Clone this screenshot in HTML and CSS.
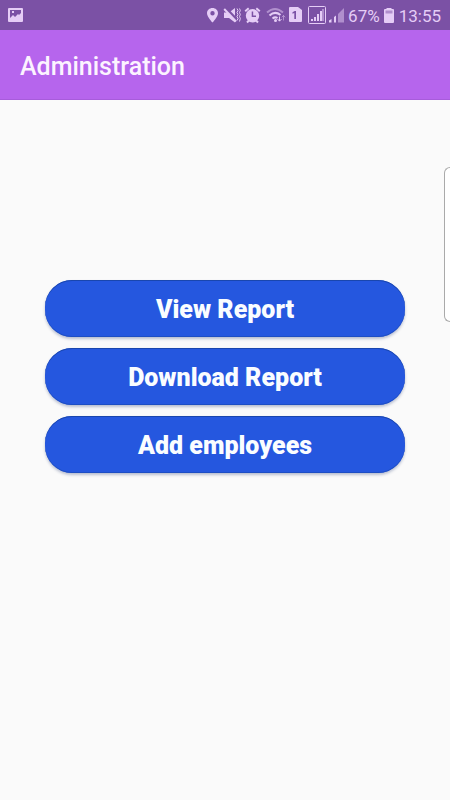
FILE: index.html
```html
<!DOCTYPE html>
<html lang="en">
<head>
<meta charset="utf-8">
<meta name="viewport" content="width=device-width, initial-scale=1">
<title>Administration</title>
<link rel="stylesheet" href="styles.css">
</head>
<body>
<div class="status-bar">
  <svg class="icon picture" width="16" height="16" viewBox="0 0 16 16" aria-hidden="true">
    <path fill-rule="evenodd" d="M1 1H14Q15 1 15 2V14Q15 15 14 15H1Q0 15 0 14V2Q0 1 1 1ZM2 3V11L5 8L7 10L10 7L11 8L13 6V3ZM4 4H6V6H4Z"/>
  </svg>
  <div class="status-items">
    <svg class="icon" width="14" height="18" viewBox="206 6 14 18" aria-hidden="true">
      <path fill-rule="evenodd" d="M212.500 8C209.400 8 207 10.200 207 13.200C207 17 212.500 22.500 212.500 22.500C212.500 22.500 218 17 218 13.200C218 10.200 215.600 8 212.500 8ZM212.500 11A2.200 2.200 0 1 1 212.500 15.400A2.200 2.200 0 1 1 212.500 11Z"/>
    </svg>
    <svg class="icon" width="18" height="18" viewBox="223 6 18 18" aria-hidden="true">
      <path d="M224 12.500H229L235 8V22.500L229 18H224Z"/>
      <path class="cut" d="M225.500 8L236.500 19.500"/>
      <path class="line" d="M224.200 9L236 21.500"/>
      <path class="line vibration" d="M237 8.500L238 10.500L237 12.500L238 14.500L237 16.500L238 18.500L237 20.500M239.500 8.500L240.300 10.500L239.500 12.500L240.300 14.500L239.500 16.500L240.300 18.500L239.500 21.500"/>
    </svg>
    <svg class="icon" width="18" height="18" viewBox="244 6 18 18" aria-hidden="true">
      <path fill-rule="evenodd" d="M252.500 9A6.700 6.700 0 1 1 252.500 22.400A6.700 6.700 0 1 1 252.500 9ZM251.700 11.500V17H256V15.600H253.200V11.500Z"/>
      <path class="line" d="M245.200 11.200L248.700 8.200M256.300 8.200L259.800 11.200M247 22.500L249 20.500M258 22.500L256 20.500"/>
    </svg>
    <svg class="icon" width="21" height="18" viewBox="265 6 21 18" aria-hidden="true">
      <path class="line dim" d="M267 12.500Q275 5.500 283 12.500"/>
      <path class="line" d="M269.500 15.500Q275 10.500 280.500 15M272.500 18.500Q275 16.500 277.500 18"/>
      <circle cx="275.500" cy="20.500" r="1.500"/>
      <path class="line vibration" d="M279.500 16.500V21M277.500 19L279.500 21.200L281.500 19"/>
      <path class="line vibration dim" d="M283.500 20.500V15.500M281.800 17.300L283.500 15.500L285.200 17.300"/>
    </svg>
    <svg class="icon" width="14" height="18" viewBox="289 6 14 18" aria-hidden="true">
      <path fill-rule="evenodd" d="M290 7H298L302 10V21Q302 22 301 22H290Q289 22 289 21V8Q289 7 290 7ZM294.700 11L292.500 12.300V13.800L294.300 13V19H296V11Z"/>
    </svg>
    <svg class="icon" width="20" height="18" viewBox="306 6 20 18" aria-hidden="true">
      <rect class="frame" x="308.500" y="6.500" width="17" height="17" rx="1"/>
      <path d="M311 19H313V21H311ZM314 17H316V21H314ZM317 14H319V21H317ZM320 11H322V21H320Z"/>
      <path class="dim" d="M322 9H324V21H322Z"/>
    </svg>
    <svg class="icon" width="16" height="18" viewBox="329 6 16 18" aria-hidden="true">
      <path d="M329 20.500L331.500 19V22.500H329ZM334 17L336 15.500V22.500H334Z"/>
      <path class="dim" d="M338 14L344 8V22.500H338Z"/>
    </svg>
    <span>67%</span>
    <svg class="icon" width="13" height="18" viewBox="384 6 13 18" aria-hidden="true">
      <path class="dim" d="M386 10H394V14H386Z"/>
      <path fill-rule="evenodd" d="M387.500 8H392.500V9H394Q395 9 395 10V22Q395 23 394 23H386Q385 23 385 22V10Q385 9 386 9H387.500ZM386.500 10.500V13.500H393.500V10.500Z"/>
    </svg>
    <time>13:55</time>
  </div>
</div>
<header class="app-bar">
  <h1>Administration</h1>
</header>
<main class="content">
  <button type="button">View Report</button>
  <button type="button">Download Report</button>
  <button type="button">Add employees</button>
</main>
<div class="edge-handle"></div>
</body>
</html>
```

FILE: styles.css
```css
* {
  box-sizing: border-box;
}

body {
  margin: 0;
  min-height: 100vh;
  background: #fafafa;
  font-family: Roboto, "Liberation Sans", sans-serif;
  overflow-x: hidden;
}

.status-bar {
  display: flex;
  align-items: center;
  justify-content: space-between;
  height: 30px;
  padding: 0 9px 0 8px;
  background: #7b51a5;
  color: #e5cdf6;
}

.status-items {
  display: flex;
  align-items: center;
  gap: 3px;
  font-size: 17px;
  line-height: 28px;
}

.status-items span,
.status-items time {
  padding-top: 2px;
}

.icon {
  display: block;
  flex: none;
  fill: #e5cdf6;
}

.line {
  fill: none;
  stroke: #e5cdf6;
  stroke-width: 2;
}

.vibration {
  stroke-width: 1;
}

.cut {
  stroke: #7b51a5;
  stroke-width: 3;
}

.frame {
  fill: none;
  stroke: #e5cdf6;
  stroke-width: 1;
}

.dim {
  opacity: 0.5;
}

.app-bar {
  display: flex;
  align-items: center;
  height: 70px;
  padding: 4px 20px 0;
  background: #b665ed;
  border-bottom: 1px solid #a75cdb;
}

h1 {
  margin: 0;
  color: #fcf3ff;
  font-size: 25px;
  font-weight: 500;
  line-height: 32px;
}

.content {
  display: flex;
  flex-direction: column;
  gap: 11px;
  padding: 180px 10% 40px;
}

button {
  height: 57px;
  padding: 2px 16px 0;
  border: 0;
  border-radius: 27px;
  background: #2557df;
  box-shadow: inset 0 1px 0 #1946ae, inset 0 -1px 0 #1d4ec4, 0 2px 3px rgba(30, 50, 110, 0.3);
  color: #fafdff;
  font-family: inherit;
  font-size: 25px;
  font-weight: 900;
  line-height: 32px;
}

.edge-handle {
  position: absolute;
  top: 167px;
  right: 0;
  width: 6px;
  height: 155px;
  background: #ffffff;
  border: 1px solid #aaaaaa;
  border-right: 0;
  border-radius: 6px 0 0 6px;
}
```
